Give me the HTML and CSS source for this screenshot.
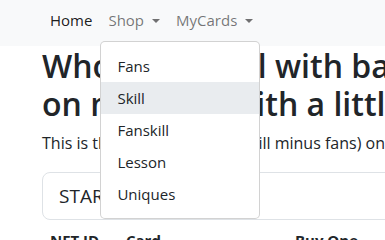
FILE: index.html
```html
<!DOCTYPE html>
<html lang="en">
<head>
<meta charset="utf-8">
<title>Fanskill</title>
<link rel="stylesheet" href="styles.css">
</head>
<body>
<nav class="navbar">
  <ul class="nav">
    <li class="nav-item"><a class="nav-link active" href="#">Home</a></li>
    <li class="nav-item dropdown">
      <a class="nav-link toggle" href="#">Shop</a>
      <ul class="dropdown-menu">
        <li><a class="dropdown-item" href="#">Fans</a></li>
        <li><a class="dropdown-item hover" href="#">Skill</a></li>
        <li><a class="dropdown-item" href="#">Fanskill</a></li>
        <li><a class="dropdown-item" href="#">Lesson</a></li>
        <li><a class="dropdown-item" href="#">Uniques</a></li>
      </ul>
    </li>
    <li class="nav-item"><a class="nav-link toggle" href="#">MyCards</a></li>
  </ul>
</nav>
<main class="container">
  <h1 class="title">Who lacks skill with bad fans<br>on my NFTs with a little luck</h1>
  <p class="lead">This is the fanskill ranking (skill minus fans) on your cards</p>
  <input class="form-control" type="text" value="STARTER">
  <table class="table">
    <thead>
      <tr><th class="c-id">NFT ID</th><th class="c-card">Card</th><th>Buy One</th></tr>
    </thead>
  </table>
</main>
</body>
</html>
```
FILE: styles.css
```css
html, body {
  margin: 0;
  overflow: hidden;
}
body {
  font-family: "Open Sans", "Noto Sans", sans-serif;
  font-size: 15px;
  line-height: 24px;
  color: #212529;
  background: #fff;
}
a { text-decoration: none; }
.navbar {
  background: #f8f9fa;
  height: 46px;
  padding-left: 42px;
}
.nav {
  display: flex;
  margin: 0;
  padding: 0;
  list-style: none;
}
.nav-item { position: relative; }
.nav-link {
  display: block;
  padding: 8px;
  color: rgba(0, 0, 0, .55);
}
.nav-link.active { color: rgba(0, 0, 0, .9); }
.toggle::after {
  content: "";
  display: inline-block;
  margin-left: 8px;
  vertical-align: 3px;
  border-top: 4px solid;
  border-left: 4px solid transparent;
  border-right: 4px solid transparent;
}
.dropdown-menu {
  position: absolute;
  top: 41px;
  left: 0;
  z-index: 10;
  width: 158px;
  margin: 0;
  padding: 8px 0;
  list-style: none;
  background: #fff;
  border: 1px solid rgba(0, 0, 0, .175);
  border-radius: 5px;
}
.dropdown-item {
  display: block;
  padding: 4px 16px;
  color: #212529;
}
.dropdown-item.hover { background: #e9ecef; }
.container {
  padding-left: 42px;
  width: 700px;
}
.title {
  margin: 1px 0 8px;
  font-size: 32px;
  line-height: 38px;
  font-weight: 600;
  white-space: nowrap;
}
.lead {
  margin: 0 0 17px;
  font-size: 16px;
  line-height: 24px;
  white-space: nowrap;
}
.form-control {
  display: block;
  box-sizing: border-box;
  width: 600px;
  height: 48px;
  margin: 0;
  padding: 8px 16px;
  font-family: inherit;
  font-size: 19px;
  color: #212529;
  border: 1px solid #dee2e6;
  border-radius: 8px;
  outline: none;
}
.table {
  border-collapse: collapse;
  width: 600px;
}
.table th {
  padding: 8px;
  text-align: left;
  font-weight: 700;
}
.c-id { width: 60px; }
.c-card { width: 153px; }
```
